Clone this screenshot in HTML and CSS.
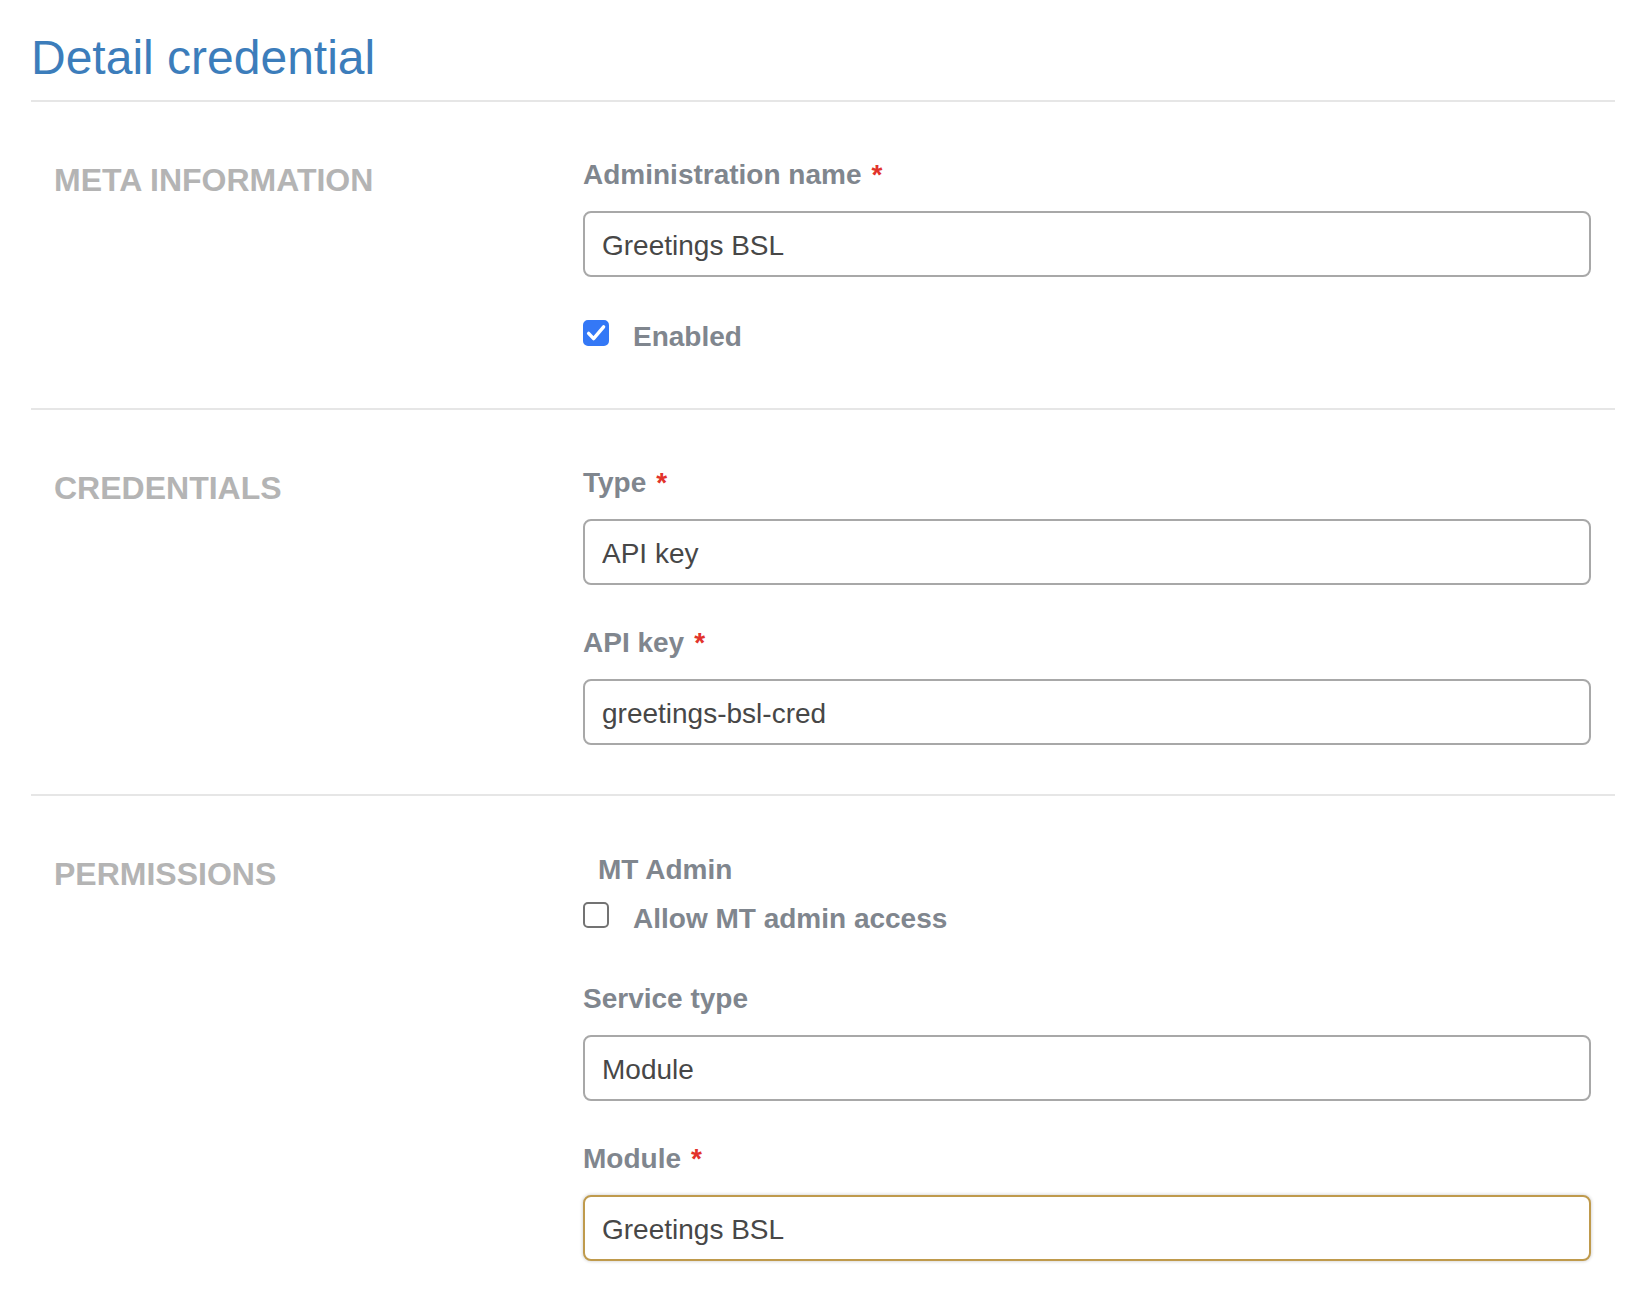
FILE: index.html
```html
<!DOCTYPE html>
<html lang="en">
<head>
<meta charset="utf-8">
<title>Detail credential</title>
<link rel="stylesheet" href="styles.css">
</head>
<body>
<div class="page">
  <h1 class="title">Detail credential</h1>

  <section class="section">
    <h2 class="section-title">META INFORMATION</h2>
    <div class="fields">
      <div class="field">
        <label class="label">Administration name<span class="req">*</span></label>
        <input class="input" type="text" value="Greetings BSL">
      </div>
      <div class="check-row">
        <span class="box box-checked">
          <svg width="26" height="26" viewBox="0 0 26 26"><path d="M5.6 13.4 L10.6 18.6 L20.6 6.8" fill="none" stroke="#fff" stroke-width="3.4" stroke-linecap="round" stroke-linejoin="round"/></svg>
        </span>
        <span class="check-text">Enabled</span>
      </div>
    </div>
  </section>

  <section class="section">
    <h2 class="section-title">CREDENTIALS</h2>
    <div class="fields">
      <div class="field">
        <label class="label">Type<span class="req">*</span></label>
        <input class="input" type="text" value="API key">
      </div>
      <div class="field">
        <label class="label">API key<span class="req">*</span></label>
        <input class="input" type="text" value="greetings-bsl-cred">
      </div>
    </div>
  </section>

  <section class="section section-last">
    <h2 class="section-title">PERMISSIONS</h2>
    <div class="fields">
      <div class="legend">MT Admin</div>
      <div class="check-row">
        <span class="box"></span>
        <span class="check-text">Allow MT admin access</span>
      </div>
      <div class="field">
        <label class="label">Service type</label>
        <input class="input" type="text" value="Module">
      </div>
      <div class="field">
        <label class="label">Module<span class="req">*</span></label>
        <input class="input input-focus" type="text" value="Greetings BSL">
      </div>
    </div>
  </section>
</div>
</body>
</html>
```

FILE: styles.css
```css
* {
  box-sizing: border-box;
}

html, body {
  margin: 0;
  padding: 0;
  background: #ffffff;
}

body {
  font-family: "Liberation Sans", Arial, Helvetica, sans-serif;
}

.page {
  padding: 0 25px 0 31px;
}

.title {
  margin: 30px 0 14px;
  font-size: 48px;
  line-height: 56px;
  font-weight: normal;
  color: #3c7dbb;
}

.section {
  border-top: 2px solid #e6e6e6;
  display: grid;
  grid-template-columns: 552px 1fr;
  padding: 55px 24px 49px 0;
}

.section-title {
  margin: 5px 0 0;
  padding-left: 23px;
  font-size: 32px;
  line-height: 37px;
  font-weight: bold;
  color: #b4b4b4;
}

.fields {
  display: flex;
  flex-direction: column;
}

.field {
  display: flex;
  flex-direction: column;
  margin-bottom: 40px;
}

.field:last-child {
  margin-bottom: 0;
}

.label {
  display: block;
  padding-top: 1px;
  font-size: 28px;
  line-height: 34px;
  font-weight: bold;
  color: #80868e;
  margin-bottom: 19px;
}

.req {
  color: #e2332b;
  margin-left: 10px;
}

.input {
  display: block;
  width: 100%;
  height: 66px;
  margin: 0;
  padding: 4px 17px 0;
  border: 2px solid #a8a8a8;
  border-radius: 8px;
  background: #ffffff;
  font-family: "Liberation Sans", Arial, Helvetica, sans-serif;
  font-size: 28px;
  color: #474747;
  outline: none;
}

.input-focus {
  border-color: #bf9a4c;
  box-shadow: 0 0 3px 1px rgba(0, 0, 0, 0.14);
}

.check-row {
  display: flex;
  align-items: flex-start;
  padding: 3px 0 5px;
  margin-bottom: 40px;
}

.check-row:last-child {
  margin-bottom: 0;
}

.box {
  flex: 0 0 auto;
  width: 26px;
  height: 26px;
  margin-top: 0;
  border: 2px solid #737373;
  border-radius: 5px;
  background: #ffffff;
}

.box svg {
  display: block;
  margin: -2px;
}

.box-checked {
  border-color: #3478f6;
  background: #3478f6;
}

.check-text {
  margin-left: 24px;
  font-size: 28px;
  line-height: 34px;
  font-weight: bold;
  color: #80868e;
}

.legend {
  padding-left: 15px;
  font-size: 28px;
  line-height: 34px;
  font-weight: bold;
  color: #80868e;
  margin: 2px 0 12px;
}
```
